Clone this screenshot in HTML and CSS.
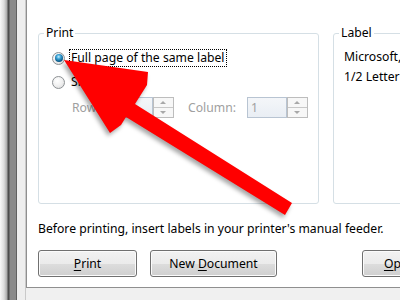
FILE: index.html
```html
<!DOCTYPE html>
<html>
<head>
<meta charset="utf-8">
<link rel="stylesheet" href="styles.css">
</head>
<body>
<div class="frame"></div>
<div class="content">
  <div class="panel">
    <div class="groups">
      <fieldset class="group print-group">
        <legend>Print</legend>
        <div class="print-body">
          <div class="opt-row">
            <span class="radio checked"></span>
            <span class="opt-label focus">Full page of the same label</span>
          </div>
          <div class="opt-row">
            <span class="radio"></span>
            <span class="opt-label">Single label</span>
          </div>
          <div class="spin-row">
            <span class="dis row-lbl">Row:</span>
            <span class="spin"><span class="spin-box">1</span><span class="spin-btns"><span class="up"></span><span class="down"></span></span></span>
            <span class="dis col-lbl">Column:</span>
            <span class="spin"><span class="spin-box">1</span><span class="spin-btns"><span class="up"></span><span class="down"></span></span></span>
          </div>
        </div>
      </fieldset>
      <fieldset class="group label-group">
        <legend>Label</legend>
        <div class="label-body">
          <div class="line">Microsoft,</div>
          <div class="line">1/2 Letter</div>
        </div>
      </fieldset>
    </div>
    <p class="note">Before printing, insert labels in your printer's manual feeder.</p>
    <div class="buttons">
      <button class="btn btn-print"><u>P</u>rint</button>
      <button class="btn btn-new">New <u>D</u>ocument</button>
      <button class="btn btn-opt"><u>O</u>ptions...</button>
    </div>
  </div>
  <div class="strip"></div>
</div>
<svg class="arrow" width="400" height="300" viewBox="0 0 400 300">
  <polygon points="64,60 148,72 147,85 135,104 292,203 285,215 126,117 121,125 110,133" fill="#ff0000"/>
</svg>
</body>
</html>
```
FILE: styles.css
```css
html, body {
  margin: 0;
  padding: 0;
}
body {
  width: 400px;
  height: 300px;
  overflow: hidden;
  display: flex;
  position: relative;
  background: #f0f0f0;
  font-family: "Noto Sans", "Open Sans", sans-serif;
  font-size: 12.2px;
  color: #000;
}
.frame {
  flex: 0 0 26px;
  height: 300px;
  background: linear-gradient(to right,
    #f8f8f8 0px, #dcdcdc 4px, #a8a8a8 7px, #4c4c4c 8px, #4c4c4c 9px,
    #8a8a8a 10px, #8a8a8a 16px, #606060 16px, #606060 17px,
    #eeeeee 17px, #eeeeee 25px, #c9c9c9 25px, #c9c9c9 26px);
}
.content {
  flex: 0 0 auto;
  display: flex;
  flex-direction: column;
}
.panel {
  width: 480px;
  height: 288px;
  box-sizing: border-box;
  background: #fff;
  border-left: 1px solid #8f8f8f;
  border-bottom: 1px solid #8f8f8f;
  padding: 25px 0 10px 11px;
}
.strip {
  height: 12px;
  background: #f0f0f0;
}
.groups {
  display: flex;
  gap: 14px;
}
.group {
  margin: 0;
  padding: 0;
  min-width: 0;
  box-sizing: border-box;
  height: 179px;
  border: 1px solid #d5dfe5;
  border-radius: 3px;
}
.print-group {
  width: 281px;
}
.label-group {
  width: 160px;
}
legend {
  margin-left: 5px;
  padding: 0 2px;
  line-height: 16px;
}
.print-body {
  padding: 7px 0 0 13px;
}
.opt-row {
  height: 20px;
  display: flex;
  align-items: center;
  margin-bottom: 4px;
}
.radio {
  width: 13px;
  height: 13px;
  box-sizing: border-box;
  border-radius: 50%;
  border: 1px solid #8d9194;
  background: radial-gradient(circle at 40% 35%, #ffffff 0%, #f0f0f0 50%, #d6d6d6 100%);
  margin-right: 4px;
  position: relative;
  flex: 0 0 auto;
}
.radio.checked::after {
  content: "";
  position: absolute;
  left: 1.5px;
  top: 1.5px;
  width: 8px;
  height: 8px;
  border-radius: 50%;
  background: radial-gradient(circle at 45% 35%, #c8f0ff 0%, #3ea6d8 30%, #0e5f8e 65%, #08385a 100%);
}
.opt-label {
  padding: 0 1px;
  border: 1px dotted transparent;
  line-height: 16px;
  white-space: nowrap;
}
.opt-label.focus {
  border-color: #000;
}
.spin-row {
  display: flex;
  align-items: center;
  height: 21px;
  padding-left: 20px;
  margin-top: 5px;
}
.dis {
  color: #a0a0a0;
}
.row-lbl {
  width: 41px;
}
.col-lbl {
  width: 59px;
  margin-left: 14px;
}
.spin {
  display: flex;
  height: 21px;
}
.spin-box {
  width: 40px;
  box-sizing: border-box;
  border: 1px solid #b8c4d2;
  background: linear-gradient(#f4f6f9, #e9eef4);
  color: #a0a0a0;
  padding-left: 3px;
  line-height: 19px;
}
.spin-btns {
  width: 21px;
  box-sizing: border-box;
  border: 1px solid #bdbdbd;
  display: flex;
  flex-direction: column;
  background: #f7f7f7;
}
.spin-btns span {
  flex: 1;
  position: relative;
}
.spin-btns .up {
  border-bottom: 1px solid #c8c8c8;
}
.spin-btns .up::after,
.spin-btns .down::after {
  content: "";
  position: absolute;
  left: 6px;
  width: 0;
  height: 0;
  border-left: 3px solid transparent;
  border-right: 3px solid transparent;
}
.spin-btns .up::after {
  top: 3px;
  border-bottom: 3px solid #a8a8a8;
}
.spin-btns .down::after {
  top: 3px;
  border-top: 3px solid #a8a8a8;
}
.label-body {
  padding: 6px 0 0 10px;
}
.line {
  line-height: 20px;
  white-space: nowrap;
}
.note {
  margin: 17px 0 0 0;
  line-height: 16px;
  white-space: nowrap;
}
.buttons {
  display: flex;
  margin-top: 13px;
}
.btn {
  height: 27px;
  box-sizing: border-box;
  border: 1px solid #707070;
  border-radius: 3px;
  box-shadow: inset 0 0 0 1px #fbfbfb;
  background: linear-gradient(#f2f2f2 0%, #ebebeb 50%, #dddddd 50%, #cfcfcf 100%);
  font-family: inherit;
  font-size: 12.2px;
  color: #000;
  padding: 0;
}
.btn u {
  text-decoration: underline;
  text-underline-offset: 2px;
}
.btn-print {
  width: 99px;
}
.btn-new {
  width: 127px;
  margin-left: 13px;
}
.btn-opt {
  width: 99px;
  margin-left: 85px;
}
.arrow {
  position: absolute;
  left: 0;
  top: 0;
  pointer-events: none;
  filter: drop-shadow(-2px 3px 2px rgba(0, 0, 0, 0.35));
}
```
